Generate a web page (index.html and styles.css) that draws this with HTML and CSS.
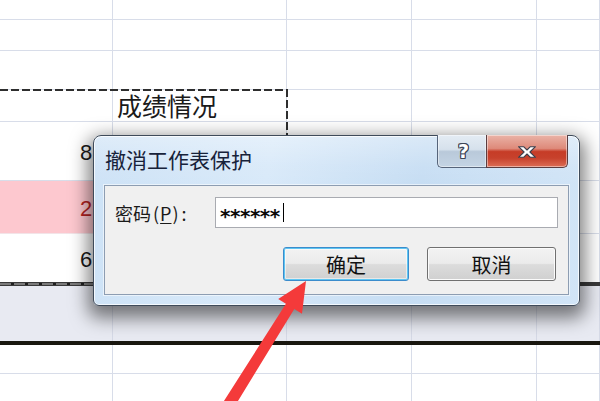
FILE: index.html
```html
<!DOCTYPE html>
<html lang="zh-CN">
<head>
<meta charset="utf-8">
<title>撤消工作表保护</title>
<link rel="stylesheet" href="styles.css">
</head>
<body>
<div class="sheet">
  <div class="row r0"><div class="c"></div><div class="c"></div><div class="c"></div><div class="c"></div><div class="c"></div></div>
  <div class="row r1"><div class="c"></div><div class="c"></div><div class="c"></div><div class="c"></div><div class="c"></div></div>
  <div class="row r2"><div class="c"></div><div class="c"></div><div class="c"></div><div class="c"></div><div class="c"></div></div>
  <div class="row r3"><div class="c"></div><div class="c head">成绩情况</div><div class="c"></div><div class="c"></div><div class="c"></div></div>
  <div class="row r4"><div class="c num">8</div><div class="c"></div><div class="c"></div><div class="c"></div><div class="c"></div></div>
  <div class="row r5"><div class="c num pink red">2</div><div class="c pink"></div><div class="c"></div><div class="c"></div><div class="c"></div></div>
  <div class="row r6 nob"><div class="c num">6</div><div class="c"></div><div class="c"></div><div class="c"></div><div class="c"></div></div>
  <div class="rule"></div>
  <div class="row band nob"><div class="c"></div><div class="c"></div><div class="c"></div><div class="c"></div><div class="c"></div></div>
  <div class="thick"></div>
  <div class="row r8"><div class="c"></div><div class="c"></div><div class="c"></div><div class="c"></div><div class="c"></div></div>
  <div class="row r9 nob"><div class="c"></div><div class="c"></div><div class="c"></div><div class="c"></div><div class="c"></div></div>

  <div class="ants"></div>

  <div class="dialog">
    <div class="titlebar">
      <div class="title">撤消工作表保护</div>
      <div class="capbtns">
        <div class="cap help"><span class="qmark">?</span></div>
        <div class="cap close">
          <svg class="xicon" width="20" height="12" viewBox="0 0 20 12">
            <path d="M1.5 0.7H6.6L10 4L13.4 0.7H18.5L12.9 6L18.5 11.3H13.4L10 8L6.6 11.3H1.5L7.1 6Z" fill="#ffffff" stroke="#3b3f4c" stroke-width="1.1" stroke-linejoin="round"/>
          </svg>
        </div>
      </div>
    </div>
    <div class="client">
      <div class="field">
        <div class="label">密码<span class="paren">(<u>P</u>)</span>:</div>
        <div class="input"><span class="pwd">******</span><span class="caret"></span></div>
      </div>
      <div class="btns">
        <div class="btn ok">确定</div>
        <div class="btn cancel">取消</div>
      </div>
    </div>
  </div>

  <svg class="arrow" width="600" height="401" viewBox="0 0 600 401">
    <polygon points="306,281 302,313.8 294.3,309.1 231.6,411.4 221.4,405 285.9,303.7 278.2,299" fill="#f43a3a"/>
  </svg>
</div>
</body>
</html>
```
FILE: styles.css
```css
html, body {
  margin: 0;
  padding: 0;
  background: #ffffff;
}

.sheet {
  position: relative;
  width: 600px;
  height: 401px;
  overflow: hidden;
  display: flex;
  flex-direction: column;
  background: #ffffff;
  font-family: "Liberation Sans", Arial, sans-serif;
}

.row {
  flex: none;
  display: grid;
  grid-template-columns: 113px 174px 125px 125px 1fr;
}

.c {
  box-sizing: border-box;
  border-right: 1px solid #d8dde9;
  border-bottom: 1px solid #d8dde9;
}

.nob .c {
  border-bottom: none;
}

.r0 { height: 20px; }
.r1 { height: 31px; }
.r2 { height: 39px; }
.r3 { height: 32px; }
.r4 { height: 59px; }
.r5 { height: 53px; }
.r6 { height: 48px; }
.band { height: 55px; background: #e8eaf2; }
.band .c { border-right-color: #d5d9e6; }
.r8 { height: 29px; }
.r9 { flex: 1; }

.head {
  padding-left: 4px;
  font-family: "Noto Sans CJK SC", "Noto Sans", sans-serif;
  font-size: 25px;
  line-height: 31px;
  color: #1a1a1a;
}

.num {
  display: flex;
  align-items: center;
  padding-left: 80px;
  padding-top: 3px;
  font-size: 22px;
  line-height: 25px;
  color: #1a1a1a;
}

.pink {
  background: #fdc8cf;
  border-bottom-color: #f3e4e8;
}

.red {
  color: #b42222;
}

.rule {
  flex: none;
  height: 4px;
  box-sizing: border-box;
  border-top: 1px solid #3a3a3a;
  border-bottom: 1px solid #3a3a3a;
  background:
    repeating-linear-gradient(90deg, #7a7a7a 0 11px, #1e1e1e 11px 14px) left top / 287px 100% no-repeat,
    #3a3a3a;
}

.thick {
  flex: none;
  height: 4px;
  background: #19170f;
}

/* copy selection marquee over the cells */
.ants {
  position: absolute;
  left: 0;
  top: 89px;
  width: 288px;
  height: 193px;
  background:
    repeating-linear-gradient(90deg, #2e2e2e 0 8px, transparent 8px 11px) left top / 100% 2px no-repeat,
    repeating-linear-gradient(180deg, #2e2e2e 0 8px, transparent 8px 11px) right top / 2px 100% no-repeat;
}

/* dialog window */
.dialog {
  position: absolute;
  left: 93px;
  top: 135px;
  width: 487px;
  height: 171px;
  box-sizing: border-box;
  display: flex;
  flex-direction: column;
  border: 1px solid #3f4b5a;
  border-radius: 8px 8px 6px 6px;
  background:
    linear-gradient(180deg, rgba(255,255,255,0.35) 0, rgba(255,255,255,0.08) 30px, rgba(255,255,255,0) 50px),
    linear-gradient(100deg, #cde2f6 0%, #d8e9f9 35%, #c6ddf3 65%, #d2e5f7 100%);
  box-shadow:
    inset 0 0 0 1px rgba(255,255,255,0.75),
    0 7px 18px 5px rgba(0,0,0,0.5);
  font-family: "Noto Sans CJK SC", "Noto Sans", sans-serif;
}

.titlebar {
  flex: none;
  height: 49px;
  display: flex;
  align-items: flex-start;
}

.title {
  padding: 11px 0 0 11px;
  font-size: 21px;
  line-height: 24px;
  color: #17223a;
}

.capbtns {
  margin-left: auto;
  margin-top: -1px;
  margin-right: 11px;
  display: flex;
  height: 33px;
}

.cap {
  box-sizing: border-box;
  height: 33px;
  display: flex;
  align-items: center;
  justify-content: center;
  border: 1px solid #56647a;
  border-top: none;
  box-shadow: inset 0 0 0 1px rgba(255,255,255,0.45);
}

.help {
  width: 49px;
  border-right: none;
  border-bottom-left-radius: 5px;
  background: linear-gradient(180deg, #e4ecf4 0%, #d6e1ec 45%, #b9c9da 52%, #c4d4e4 100%);
}

.close {
  width: 82px;
  border-color: #5b3d40;
  border-bottom-right-radius: 5px;
  background: linear-gradient(180deg, #eab3a7 0%, #de8a7a 42%, #c63c27 52%, #c7412c 72%, #dc6e56 100%);
}

.qmark {
  font-family: "DejaVu Sans", sans-serif;
  font-weight: bold;
  font-size: 19px;
  line-height: 20px;
  color: #ffffff;
  margin-left: 3px;
  text-shadow:
    1px 0 0 #3e4656, -1px 0 0 #3e4656, 0 1px 0 #3e4656, 0 -1px 0 #3e4656,
    1px 1px 0 #3e4656, -1px -1px 0 #3e4656, 1px -1px 0 #3e4656, -1px 1px 0 #3e4656;
}

.xicon {
  display: block;
  margin-top: 2px;
}

.client {
  flex: 1;
  margin: 0 10px 10px 10px;
  border: 1px solid #8d9db2;
  background: #f0f0f0;
  box-shadow: 0 0 0 1px rgba(255,255,255,0.55);
  display: flex;
  flex-direction: column;
}

.field {
  display: flex;
  align-items: center;
  margin: 11px 10px 0 10px;
}

.label {
  flex: none;
  width: 100px;
  font-size: 18px;
  line-height: 24px;
  color: #1a1a1a;
  white-space: nowrap;
}

.paren {
  margin: 0 3px 0 2px;
}

.paren u {
  margin: 0 1px;
  text-underline-offset: 2px;
}

.input {
  flex: 1;
  height: 31px;
  box-sizing: border-box;
  border: 1px solid #a9abb1;
  background: #ffffff;
  display: flex;
  align-items: center;
  padding-left: 4px;
}

.pwd {
  font-family: "DejaVu Sans", sans-serif;
  font-weight: bold;
  font-size: 20px;
  line-height: 20px;
  padding-top: 7px;
  letter-spacing: -0.5px;
  color: #0a0a0a;
}

.caret {
  width: 1px;
  height: 19px;
  margin-left: 3px;
  background: #000000;
}

.btns {
  display: flex;
  justify-content: flex-end;
  gap: 18px;
  margin: 19px 12px 0 0;
}

.btn {
  box-sizing: border-box;
  height: 34px;
  display: flex;
  align-items: center;
  justify-content: center;
  font-size: 20px;
  color: #111111;
  border-radius: 3px;
  background: linear-gradient(180deg, #f3f3f3 0%, #ebebeb 48%, #dcdcdc 52%, #d0d0d0 100%);
}

.ok {
  width: 126px;
  border: 1px solid #3b8ccc;
  box-shadow: inset 0 0 0 1px #5fc6f2, inset 0 0 0 2px rgba(255,255,255,0.5);
}

.cancel {
  width: 129px;
  border: 1px solid #707070;
  box-shadow: inset 0 0 0 1px #fbfbfb;
}

.arrow {
  position: absolute;
  left: 0;
  top: 0;
  pointer-events: none;
}
```
